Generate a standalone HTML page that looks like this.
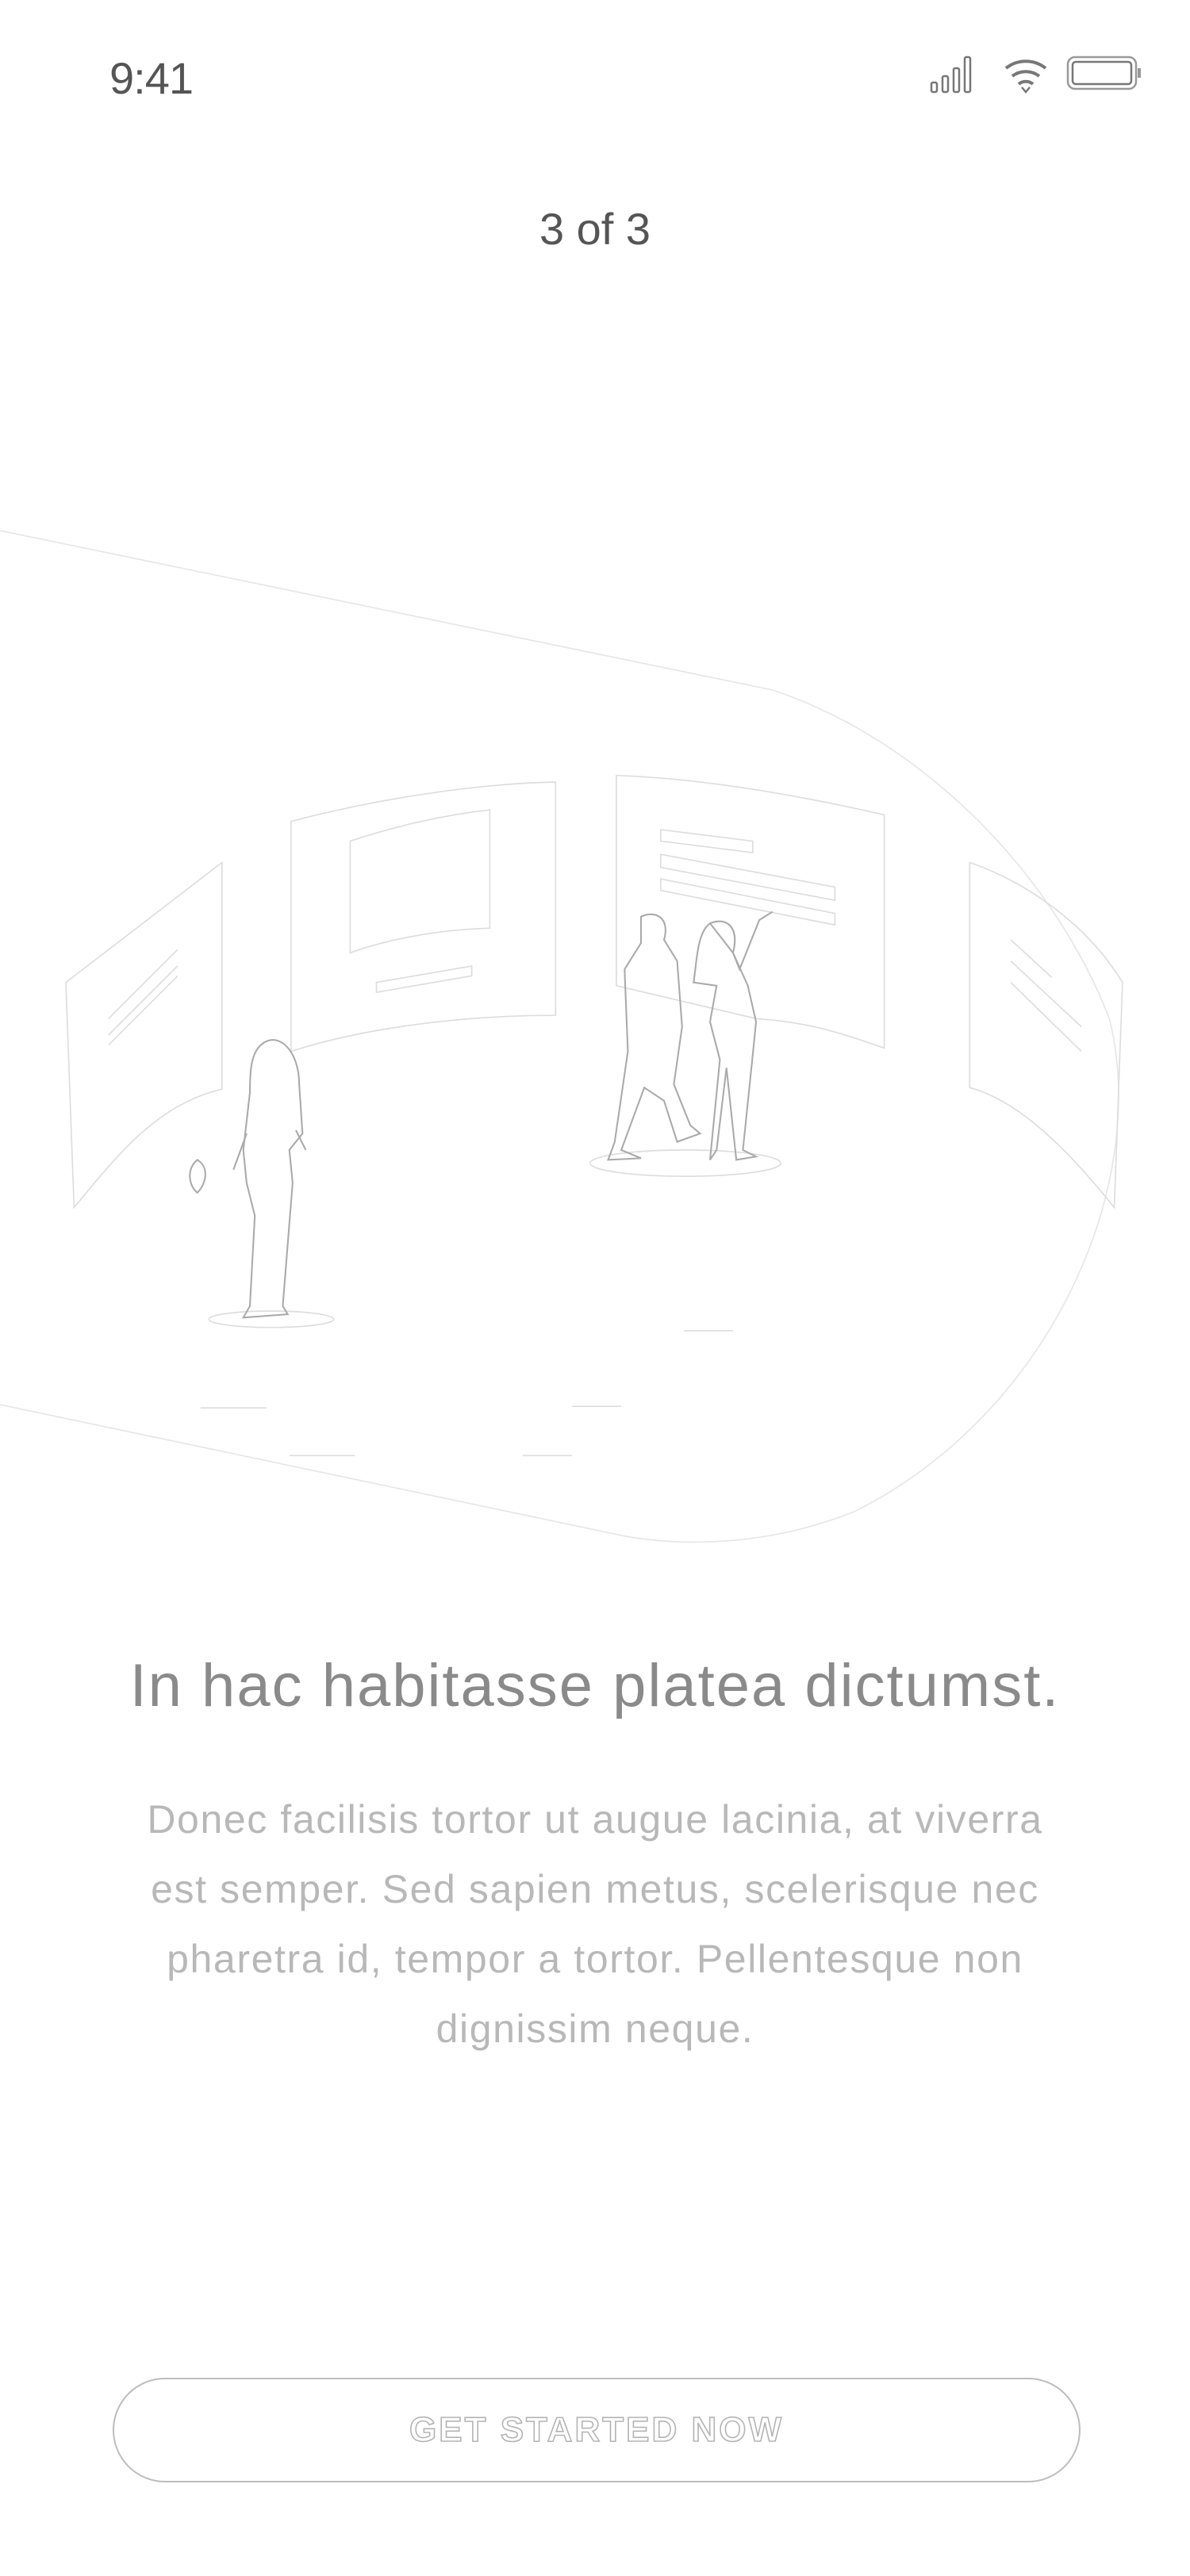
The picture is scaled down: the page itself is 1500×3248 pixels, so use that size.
<!DOCTYPE html>
<html><head><meta charset="utf-8"><style>
html,body{margin:0;padding:0;background:#fff;}
body{width:1500px;height:3248px;position:relative;overflow:hidden;font-family:"Liberation Sans",sans-serif;}
.abs{position:absolute;}
#time{left:138px;top:66px;font-size:56px;color:#555;font-weight:300;letter-spacing:-1px;}
#step{left:0;width:1500px;top:256px;text-align:center;font-size:56px;color:#555;}
#head{left:0;width:1500px;top:2082px;text-align:center;font-size:76px;color:#8a8a8a;letter-spacing:2px;}
#body{left:0;width:1500px;top:2250px;text-align:center;font-size:50px;line-height:88px;color:#b8b8b8;letter-spacing:1.6px;}
#btn{left:142px;top:2998px;width:1220px;height:132px;border:2.5px solid #bdbdbd;border-radius:70px;box-sizing:border-box;text-align:center;line-height:128px;font-size:44px;font-weight:bold;color:#fff;-webkit-text-stroke:1.6px #b4b4b4;letter-spacing:3px;}
</style></head><body>
<div id="time" class="abs">9:41</div>
<svg class="abs" style="left:1170px;top:64px" width="280" height="56" viewBox="0 0 280 56">
 <g fill="none" stroke="#777" stroke-width="2.5">
  <rect x="4" y="40" width="7" height="12" rx="2"/>
  <rect x="18" y="32" width="7" height="20" rx="2"/>
  <rect x="32" y="22" width="7" height="30" rx="2"/>
  <rect x="46" y="8" width="7" height="44" rx="2"/>
  <g stroke-width="4"><path d="M98 22 A40 40 0 0 1 148 22"/><path d="M106 32 A28 28 0 0 1 140 32"/><path d="M114 42 A14 14 0 0 1 132 42"/></g><path d="M118 46 L123 52 L128 46"/>
  <rect x="176" y="8" width="86" height="40" rx="9" stroke="#999"/>
  <rect x="182" y="14" width="74" height="28" rx="4"/>
  <path d="M266 22 v12" stroke="#999" stroke-width="4"/>
 </g>
</svg>
<div id="step" class="abs">3 of 3</div>

<svg class="abs" style="left:0;top:0" width="1500" height="3248" viewBox="0 0 724 1568">
 <g fill="none" stroke="#ddd" stroke-width="0.8">
  <path d="M0 323 L470 420 C560 450 640 530 675 620 C700 720 640 860 520 920 C470 940 420 942 380 935 L0 855" stroke="#e6e6e6"/>
  <path d="M40 598 L135 525 L135 663 C95 672 70 705 45 735 Z"/>
  <path d="M66 620 L108 578 M66 630 L108 588 M66 636 L108 594"/>
  <path d="M177 500 C230 486 290 477 338 476 L338 618 C280 618 220 626 177 640 Z"/>
  <path d="M213 512 C240 503 270 496 298 493 L298 565 C265 566 235 572 213 580 Z"/>
  <path d="M229 598 L287 588 L287 594 L229 604 Z"/>
  <path d="M375 472 C430 474 490 485 538 496 L538 638 C510 628 490 622 460 620 L375 600 Z"/>
  <path d="M402 505 L458 512 L458 519 L402 512 Z M402 520 L508 540 L508 548 L402 528 Z M402 535 L508 556 L508 563 L402 542 Z"/>
  <path d="M590 525 C620 535 660 560 683 598 L678 735 C650 700 620 670 590 662 Z"/>
  <path d="M615 572 L640 595 M615 585 L658 625 M615 598 L658 640"/>
  <ellipse cx="165" cy="803" rx="38" ry="5"/>
  <ellipse cx="417" cy="708" rx="58" ry="8"/>
  <path d="M122 857 h40 M176 886 h40 M348 856 h30 M318 886 h30 M416 810 h30"/>
 </g>
 <g fill="none" stroke="#aaa" stroke-width="1">
  <path d="M160 635 C170 628 182 640 182 660 L184 690 L176 700 L178 720 L172 795 L175 800 L148 802 L152 795 L155 740 L150 720 L148 700 L152 665 C152 650 153 640 160 635 Z"/>
  <path d="M150 690 L142 712 M180 688 L186 700"/>
  <path d="M390 558 C398 554 408 558 404 572 L412 585 L415 625 L410 660 L420 685 L426 690 L412 695 L404 670 L392 662 L378 700 L390 705 L370 706 L374 695 L382 640 L380 590 L390 574 Z"/>
  <path d="M432 562 C442 558 450 564 446 580 L450 590 L462 560 L470 555 M446 580 L455 600 L460 622 L458 642 L452 700 L460 704 L448 706 L442 650 L436 700 L432 706 L438 645 L432 622 L436 600 L422 598 C424 585 424 568 432 562 Z"/>
  <path d="M120 706 C113 712 115 722 120 726 C126 720 127 710 120 706 Z"/>
 </g>
</svg>

<div id="head" class="abs">In hac habitasse platea dictumst.</div>
<div id="body" class="abs">Donec facilisis tortor ut augue lacinia, at viverra<br>est semper. Sed sapien metus, scelerisque nec<br>pharetra id, tempor a tortor. Pellentesque non<br>dignissim neque.</div>
<div id="btn" class="abs">GET STARTED NOW</div>
</body></html>
